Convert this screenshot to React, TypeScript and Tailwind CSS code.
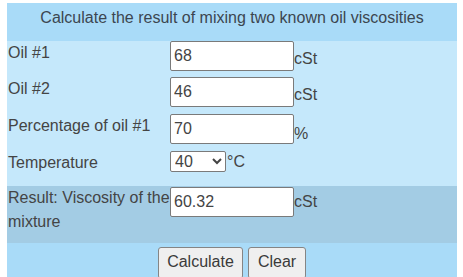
import { useState } from 'react';

const rows = [
    { label: 'Oil #1', value: '68', unit: 'cSt', h: 'h-[36px]', up: 'pt-[6px]' },
    { label: 'Oil #2', value: '46', unit: 'cSt', h: 'h-[37px]', up: 'pt-[6px]' },
    { label: 'Percentage of oil #1', value: '70', unit: '%', h: 'h-[37px]', up: 'pt-[8px]' },
];

export default function App() {
    const [temp, setTemp] = useState('40');

    return (
        <div className="pt-[3px] pl-[7px] font-['Liberation_Sans',Arial,sans-serif] text-[16px] text-[#444]">
            <div className="w-[450px] bg-[#c5e8fb]">
                <div className="h-[38px] pt-[6px] leading-[18px] text-center bg-[#a9dbf8] text-[#3c4650]">
                    Calculate the result of mixing two known oil viscosities
                </div>

                {rows.map(r => (
                    <div key={r.label} className={`grid grid-cols-[163px_124px_1fr] ${r.h}`}>
                        <div className="leading-6 pl-[1px]">{r.label}</div>
                        <input
                            defaultValue={r.value}
                            className="h-[30px] w-[124px] bg-white border border-[#7a7a7a] rounded-[2px] px-[3px] text-[16px] text-[#444] outline-none"
                        />
                        <div className={`leading-6 ${r.up}`}>{r.unit}</div>
                    </div>
                ))}

                <div className="grid grid-cols-[163px_56px_1fr] h-[35px]">
                    <div className="leading-6 pl-[1px]">Temperature</div>
                    <select
                        value={temp}
                        onChange={e => setTemp(e.target.value)}
                        className="h-[21px] w-[56px] pr-[4px] bg-white border border-[#7a7a7a] rounded-[2px] text-[16px] text-[#444]">
                        {['20', '40', '50', '100'].map(t => (
                            <option key={t} value={t}>{t}</option>
                        ))}
                    </select>
                    <div className="leading-[21px] pl-[1px]">°C</div>
                </div>

                <div className="grid grid-cols-[163px_124px_1fr] h-[57px] bg-[#a3cce4]">
                    <div className="leading-6 pl-[1px]">Result: Viscosity of the mixture</div>
                    <input
                        readOnly
                        value="60.32"
                        className="mt-[1px] h-[30px] w-[124px] bg-white border border-[#7a7a7a] rounded-[2px] px-[3px] text-[16px] text-[#444] outline-none"
                    />
                    <div className="leading-6 pt-[4px]">cSt</div>
                </div>

                <div className="flex justify-center gap-[5px] pt-[4px] pb-[6px] bg-[#a9dbf8]">
                    <button className="w-[85px] pt-[5px] pb-[7px] leading-[18px] bg-[#efefef] border border-[#858585] rounded-[3px] text-[#3a3a3a]">
                        Calculate
                    </button>
                    <button className="w-[58px] pt-[5px] pb-[7px] leading-[18px] bg-[#efefef] border border-[#858585] rounded-[3px] text-[#3a3a3a]">
                        Clear
                    </button>
                </div>
            </div>
        </div>
    );
}
